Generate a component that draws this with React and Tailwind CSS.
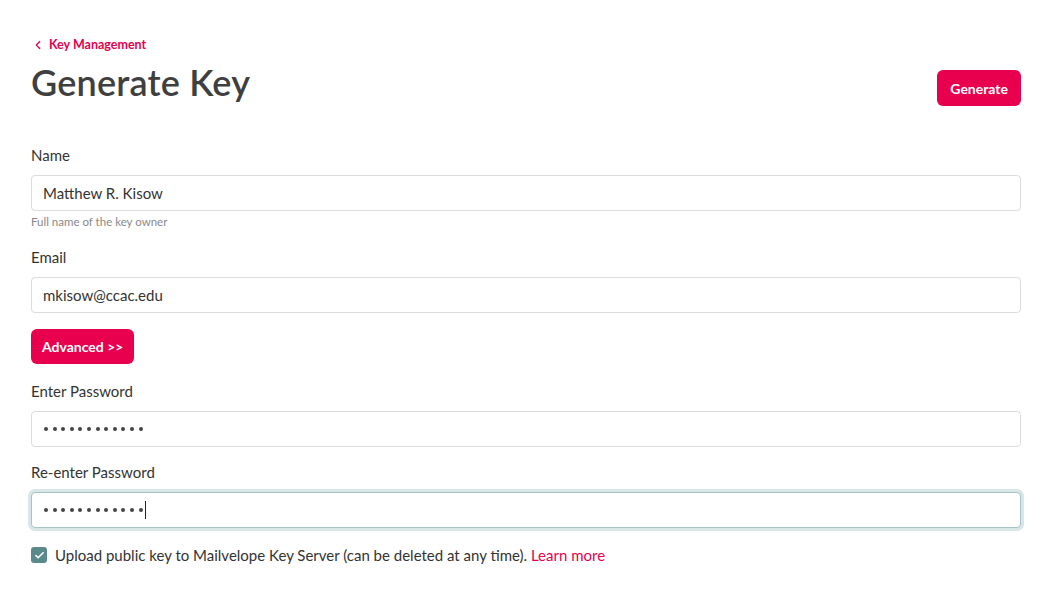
import { ChevronLeft, Check } from 'lucide-react'

const Field = ({ label, value, type = 'text', focused, hint }) => (
    <div className="flex flex-col">
        <label className="text-[15px] text-[#333] leading-[20px] mb-[10px]">{label}</label>
        <div
            className={`h-[36px] rounded-[4px] bg-white flex items-center px-[11px] ${
                focused
                    ? 'border border-[#a9c2c5] ring-[3px] ring-[#d8e6e7]'
                    : 'border border-[#dcdcdc]'
            }`}
        >
            {type === 'password' ? (
                <span className="flex items-center gap-[4.6px] pl-[1px]">
                    {Array.from({ length: 12 }).map((_, i) => (
                        <span key={i} className="w-[4px] h-[4px] rounded-full bg-[#444]" />
                    ))}
                    {focused && <span className="w-px h-[18px] bg-[#222] -ml-[2px]" />}
                </span>
            ) : (
                <span className="text-[15px] text-[#333]">{value}</span>
            )}
        </div>
        {hint && <span className="text-[11.5px] text-[#888] mt-[4px] leading-[14px]">{hint}</span>}
    </div>
)

export default function App() {
    return (
        <div className="min-h-screen bg-white font-['Lato','Open_Sans',sans-serif] px-[31px] pt-[37px] w-[1052px]">
            <a className="flex items-center gap-[4px] text-[#e8004e] text-[12.5px] font-bold leading-[16px]">
                <ChevronLeft className="w-[14px] h-[14px]" strokeWidth={2.2} />
                Key Management
            </a>
            <div className="flex items-start justify-between mt-[6px]">
                <h1 className="text-[36px] font-semibold text-[#3f3f3f] leading-[46px] tracking-[0.2px]">Generate Key</h1>
                <button className="mt-[11px] h-[36px] px-[13px] rounded-[6px] bg-[#e8004e] text-white text-[14px] font-bold">
                    Generate
                </button>
            </div>

            <div className="mt-[39px] flex flex-col">
                <Field label="Name" value="Matthew R. Kisow" hint="Full name of the key owner" />
                <div className="mt-[18px]">
                    <Field label="Email" value="mkisow@ccac.edu" />
                </div>
                <div className="mt-[16px]">
                    <button className="h-[35px] px-[11px] rounded-[6px] bg-[#e8004e] text-white text-[14px] font-bold">
                        Advanced &gt;&gt;
                    </button>
                </div>
                <div className="mt-[17px]">
                    <Field label="Enter Password" type="password" />
                </div>
                <div className="mt-[15px]">
                    <Field label="Re-enter Password" type="password" focused />
                </div>
                <div className="mt-[16px] flex items-center gap-[8px]">
                    <span className="w-[16px] h-[16px] rounded-[3px] bg-[#5a8a8c] flex items-center justify-center">
                        <Check className="w-[11px] h-[11px] text-white" strokeWidth={3.5} />
                    </span>
                    <span className="text-[15px] text-[#333]">
                        Upload public key to Mailvelope Key Server (can be deleted at any time).{' '}
                        <a className="text-[#e8004e]">Learn more</a>
                    </span>
                </div>
            </div>
        </div>
    )
}
